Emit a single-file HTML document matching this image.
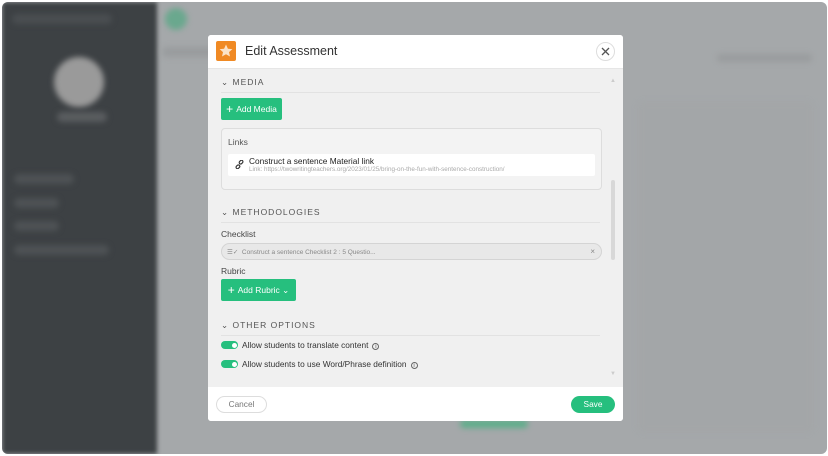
<!DOCTYPE html>
<html><head><meta charset="utf-8"><style>
*{box-sizing:border-box;margin:0;padding:0}
body{width:828px;height:456px;background:#fff;font-family:"Liberation Sans",sans-serif;overflow:hidden;position:relative}
.frame{position:absolute;left:2px;top:2px;width:825px;height:452px;border-radius:6px;overflow:hidden;background:#a5a8aa}
.side{position:absolute;left:0;top:0;width:155px;height:100%;background:#3d4144;filter:blur(2px)}
.blob{position:absolute;border-radius:20px;filter:blur(3px)}
.modal{position:absolute;left:208px;top:35px;width:415px;height:386px;background:#f0f0f0;border-radius:3px;overflow:hidden}
.hdr{position:absolute;left:0;top:0;width:100%;height:34px;background:#fff;border-bottom:1px solid #e6e6e6}
.logo{position:absolute;left:8px;top:6px;width:20px;height:20px;background:#f08a24;border-radius:2px}
.title{position:absolute;left:37px;top:9px;font-size:12.5px;color:#333}
.close{position:absolute;left:388px;top:7px;width:19px;height:19px;border:1px solid #ddd;border-radius:50%;background:#fff}
.sec{position:absolute;left:13px;font-size:8.5px;letter-spacing:1px;color:#555;width:379px;border-bottom:1px solid #e2e2e2;padding-bottom:4px}
.btn{position:absolute;background:#26bf7e;color:#fff;font-size:8.5px;border-radius:2px;display:flex;align-items:center;justify-content:center}
.btn b{font-weight:normal;font-size:12px;margin-right:3px;line-height:10px}
.lbl{position:absolute;left:13px;font-size:8.5px;color:#444}
.ftr{position:absolute;left:0;top:352px;width:100%;height:34px;background:#fff}
.tog{position:absolute;left:13px;width:17px;height:8px;border-radius:4px;background:#26bf7e}
.tog:after{content:"";position:absolute;right:1.5px;top:1.5px;width:5px;height:5px;border-radius:50%;background:#fff}
.opt{position:absolute;left:34px;font-size:8.3px;color:#333}
.i{display:inline-block;width:7px;height:7px;border:0.8px solid #666;border-radius:50%;font-size:5px;text-align:center;line-height:6px;margin-left:4px;vertical-align:0}
</style></head><body>
<div class="frame">
 <div class="side"></div>
 <div class="blob" style="left:52px;top:55px;width:50px;height:50px;border-radius:50%;background:#9a9a9a"></div>
 <div class="blob" style="left:55px;top:110px;width:50px;height:10px;background:#5a5d60"></div>
 <div class="blob" style="left:12px;top:172px;width:60px;height:10px;background:#4e5255"></div>
 <div class="blob" style="left:12px;top:196px;width:45px;height:10px;background:#4e5255"></div>
 <div class="blob" style="left:12px;top:219px;width:45px;height:10px;background:#4e5255"></div>
 <div class="blob" style="left:12px;top:243px;width:95px;height:10px;background:#4e5255"></div>
 <div class="blob" style="left:10px;top:12px;width:100px;height:10px;background:#4a4e51"></div>
 <div class="blob" style="left:163px;top:6px;width:22px;height:22px;border-radius:50%;background:#6aa88e"></div>
 <div class="blob" style="left:160px;top:45px;width:60px;height:10px;background:#999c9e"></div>
 <div class="blob" style="left:715px;top:52px;width:95px;height:8px;background:#999c9e"></div>
 <div class="blob" style="left:636px;top:100px;width:175px;height:330px;border-radius:4px;background:#a3a6a8"></div>
 <div class="blob" style="left:458px;top:418px;width:68px;height:8px;background:#5dae8a"></div>
</div>
<div class="modal">
 <div class="hdr">
  <div class="logo"><svg width="20" height="20" viewBox="0 0 20 20"><path d="M10 3.5l1.9 4.2 4.5.4-3.4 3 1 4.4L10 13.2l-4 2.3 1-4.4-3.4-3 4.5-.4z" fill="#fbe3c8"/></svg></div>
  <div class="title">Edit Assessment</div>
  <div class="close"><svg width="17" height="17" viewBox="0 0 17 17"><path d="M5 5l7 7M12 5l-7 7" stroke="#555" stroke-width="1.3"/></svg></div>
 </div>
 <div class="sec" style="top:42px">⌄ MEDIA</div>
 <div class="btn" style="left:13px;top:63px;width:61px;height:22px"><b>+</b>Add Media</div>
 <div style="position:absolute;left:13px;top:93px;width:381px;height:62px;border:1px solid #ddd;border-radius:4px;background:#f3f3f3"></div>
 <div class="lbl" style="left:20px;top:102px;color:#555">Links</div>
 <div style="position:absolute;left:20px;top:119px;width:367px;height:22px;background:#fff;border-radius:2px"></div>
 <svg style="position:absolute;left:27px;top:125px" width="9" height="9" viewBox="0 0 10 10"><g fill="none" stroke="#333" stroke-width="1.3"><rect x="4.5" y="0.8" width="4.5" height="3.2" rx="1.6" transform="rotate(-45 6.7 2.4)"/><rect x="1" y="6" width="4.5" height="3.2" rx="1.6" transform="rotate(-45 3.2 7.6)"/></g></svg>
 <div style="position:absolute;left:41px;top:121px;font-size:8.3px;color:#222">Construct a sentence Material link</div>
 <div style="position:absolute;left:41px;top:131px;font-size:6.3px;color:#aaa">Link: https://twowritingteachers.org/2023/01/25/bring-on-the-fun-with-sentence-construction/</div>
 <div class="sec" style="top:172px">⌄ METHODOLOGIES</div>
 <div class="lbl" style="top:194px">Checklist</div>
 <div style="position:absolute;left:13px;top:208px;width:381px;height:17px;border:1px solid #d4d4d4;border-radius:9px;background:#e8e8e8;font-size:6.5px;color:#888;padding:4px 0 0 5px">☰✓&nbsp; Construct a sentence Checklist 2 : 5 Questio...<span style="position:absolute;right:6px;top:3px;font-size:8px">×</span></div>
 <div class="lbl" style="top:231px">Rubric</div>
 <div class="btn" style="left:13px;top:244px;width:75px;height:22px"><b>+</b>Add Rubric&nbsp;⌄</div>
 <div class="sec" style="top:285px">⌄ OTHER OPTIONS</div>
 <div class="tog" style="top:306px"></div><div class="opt" style="top:305px">Allow students to translate content<span class="i">i</span></div>
 <div class="tog" style="top:325px"></div><div class="opt" style="top:324px">Allow students to use Word/Phrase definition<span class="i">i</span></div>
 <div style="position:absolute;left:403px;top:145px;width:4px;height:80px;background:#d8d8d8;border-radius:2px"></div>
 <div style="position:absolute;left:402px;top:43px;font-size:6px;color:#ccc">▲</div>
 <div style="position:absolute;left:402px;top:336px;font-size:6px;color:#ccc">▼</div>
 <div class="ftr">
  <div style="position:absolute;left:8px;top:9px;width:51px;height:17px;border:1px solid #ddd;border-radius:9px;font-size:8.3px;color:#777;text-align:center;line-height:15px">Cancel</div>
  <div style="position:absolute;left:363px;top:9px;width:44px;height:17px;background:#26bf7e;border-radius:9px;font-size:8.3px;color:#fff;text-align:center;line-height:17px">Save</div>
 </div>
</div>
</body></html>
